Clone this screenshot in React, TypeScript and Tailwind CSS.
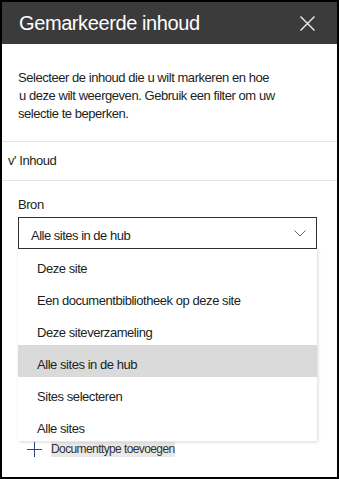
import React from "react";

const items = [
  "Deze site",
  "Een documentbibliotheek op deze site",
  "Deze siteverzameling",
  "Alle sites in de hub",
  "Sites selecteren",
  "Alle sites",
];

export default function App() {
  return (
    <div className="w-[339px] h-[479px] border-2 border-black bg-white relative overflow-hidden font-['Liberation_Sans',Arial,sans-serif] text-[#201f1e]">
      <div className="h-[42px] bg-[#3b3b3b] flex items-center justify-between pl-[17px] pr-[22px]">
        <span className="text-[20px] leading-none tracking-[-0.4px] text-white">Gemarkeerde inhoud</span>
        <svg width="15" height="15" viewBox="0 0 15 15" className="block">
          <path d="M0.5 0.5 L14.5 14.5 M14.5 0.5 L0.5 14.5" stroke="#f0f0f0" strokeWidth="1.4" fill="none" />
        </svg>
      </div>
      <div className="pl-[16px] pt-[25px] pb-[18px] text-[13px] leading-[18px] tracking-[-0.45px] text-[#201f1e] border-b border-[#e4e4e4]">
        Selecteer de inhoud die u wilt markeren en hoe
        <br />
        <span className="pl-[1px]">u deze wilt weergeven. Gebruik een filter om uw</span>
        <br />
        selectie te beperken.
      </div>
      <div className="h-[39px] flex items-center pl-[6px] text-[13px] tracking-[-0.45px] border-b border-[#e4e4e4]">
        v' Inhoud
      </div>
      <div className="pl-[16px] pr-[20px] pt-[16px]">
        <div className="text-[13px] leading-[16px] tracking-[-0.45px]">Bron</div>
        <div className="relative mt-[4px]">
          <div className="h-[32px] border border-[#323130] flex items-center justify-between pl-[12px] pr-[10px]">
            <span className="pt-[6px] text-[13px] leading-[16px] tracking-[-0.5px]">Alle sites in de hub</span>
            <svg width="12" height="7" viewBox="0 0 12 7" className="block">
              <path d="M0.5 0.5 L6 6 L11.5 0.5" stroke="#707070" strokeWidth="1" fill="none" />
            </svg>
          </div>
          <div className="absolute top-full left-0 right-0 z-10 bg-white shadow-[1px_1px_3px_rgba(0,0,0,0.16)]">
            {items.map((it) => (
              <div
                key={it}
                className={
                  "h-[32px] pt-[12px] pl-[19px] text-[13px] leading-[16px] tracking-[-0.45px] " +
                  (it === "Alle sites in de hub" ? "bg-[#dadada]" : "bg-white")
                }
              >
                {it}
              </div>
            ))}
          </div>
        </div>
        <div className="mt-[193px] pl-[9px] flex items-center">
          <svg width="15" height="15" viewBox="0 0 15 15" className="block">
            <path d="M7.5 0 L7.5 15 M0 7.5 L15 7.5" stroke="#2f3f8f" strokeWidth="1" fill="none" />
          </svg>
          <span className="ml-[9px] bg-[#e8e8e8] text-[12px] leading-[15px] tracking-[-0.6px] text-[#323130]">
            Documenttype toevoegen
          </span>
        </div>
      </div>
    </div>
  );
}
